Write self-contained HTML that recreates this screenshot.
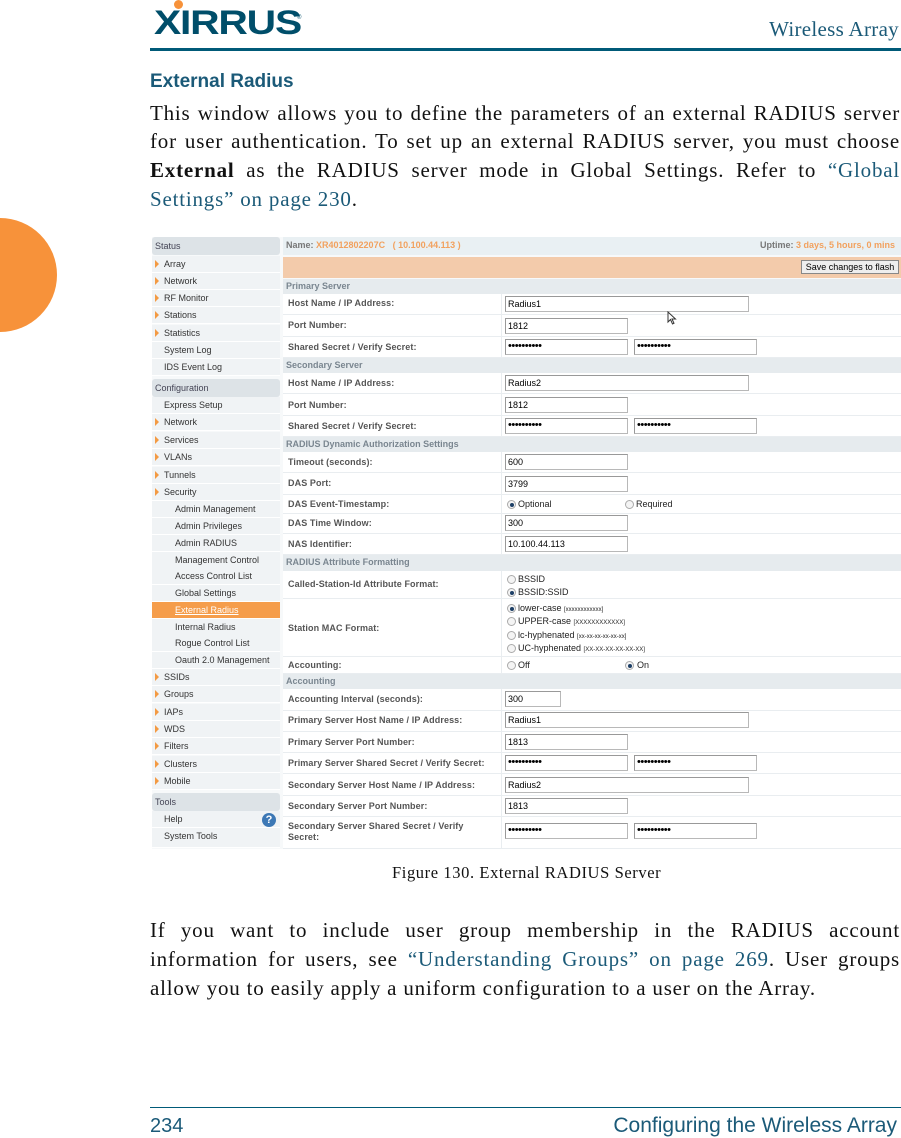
<!DOCTYPE html>
<html><head><meta charset="utf-8"><style>
*{margin:0;padding:0;box-sizing:border-box}
body{width:901px;height:1137px;position:relative;background:#fff;overflow:hidden;font-family:"Liberation Serif",serif}
.a{position:absolute;white-space:nowrap}
.s{position:absolute;white-space:nowrap;font:9px/11px "Liberation Sans",sans-serif;color:#222}
.lb{position:absolute;left:288px;white-space:nowrap;font:bold 9px/11px "Liberation Sans",sans-serif;color:#555;letter-spacing:.1px}
.hd{position:absolute;left:283px;width:618px;background:#e6ebee;font:bold 9px/14px "Liberation Sans",sans-serif;color:#7a8690;padding-left:3px}
.rw{position:absolute;left:283px;width:618px;border-bottom:1px solid #e9edf0;background:#fff}
.rw:after{content:"";position:absolute;left:218px;top:0;bottom:0;width:1px;background:#e9edf0}
.in{position:absolute;height:16px;border:1px solid #b8b8b8;border-top-color:#999;border-left-color:#999;background:#fff;font:9px/14px "Liberation Sans",sans-serif;color:#000;padding-left:2px;overflow:hidden}
.L{left:505px;width:244px}.S{left:505px;width:123px}.S2{left:634px;width:123px}
.p{font-size:11px;letter-spacing:-.5px;line-height:12px}
.sb{position:absolute;left:152px;width:128px;background:#f0f3f5;border-bottom:1px solid #fff;font:9px/17px "Liberation Sans",sans-serif;color:#333;padding-left:12px;height:17px}
.sb.ar:before{content:"";position:absolute;left:3px;top:4px;border-left:4px solid #f39a43;border-top:4px solid transparent;border-bottom:4px solid transparent}
.sb.j{padding-left:23px}
.sh{position:absolute;left:152px;width:128px;background:#dde3e7;border-radius:3px;font:9px/18px "Liberation Sans",sans-serif;color:#445;padding-left:3px;height:18px}
.rd{position:absolute;width:9px;height:9px;border-radius:50%;border:1px solid #aaa;background:#f4f4f4}
.rd.on:after{content:"";position:absolute;left:1.5px;top:1.5px;width:4px;height:4px;border-radius:50%;background:#1d3f66}
.tx{position:absolute;left:150px;width:750px;font-size:21px;letter-spacing:.8px;line-height:29px;text-align:justify;text-align-last:justify;color:#111;white-space:nowrap}
.lk{color:#1b5a78}
</style></head><body>

<div class="a" style="left:154px;top:4px;font:bold 34px/38px 'Liberation Sans',sans-serif;color:#004e6a;letter-spacing:-1px;transform:scaleX(1.2);transform-origin:left">XIRRUS</div>
<div class="a" style="left:174px;top:0;width:9px;height:9px;border-radius:50%;background:#f7923a"></div>
<div class="a" style="left:297px;top:15px;font:6px 'Liberation Sans';color:#004e6a">®</div>
<div class="a" style="right:2px;top:17px;font-size:21px;letter-spacing:.3px;color:#1b5a78">Wireless Array</div>
<div class="a" style="left:150px;top:48px;width:751px;height:3px;background:#005a78"></div>

<div class="a" style="left:-57px;top:218px;width:114px;height:114px;border-radius:50%;background:#f7923a"></div>

<div class="a" style="left:150px;top:70px;font:bold 19px/24px 'Liberation Sans',sans-serif;color:#1b5a78">External Radius</div>
<div class="tx" style="top:99px">This window allows you to define the parameters of an external RADIUS server</div>
<div class="tx" style="top:127px">for user authentication. To set up an external RADIUS server, you must choose</div>
<div class="tx" style="top:156px"><b>External</b> as the RADIUS server mode in Global Settings. Refer to <span class="lk">“Global</span></div>
<div class="tx" style="top:185px;text-align-last:left"><span class="lk">Settings” on page 230</span>.</div>

<div class="a" style="left:152px;top:237px;width:749px;height:612px;background:#f7f9fa"></div>
<div class="sh" style="top:237px">Status</div>
<div class="sb ar" style="top:256px">Array</div>
<div class="sb ar" style="top:273px">Network</div>
<div class="sb ar" style="top:290px">RF Monitor</div>
<div class="sb ar" style="top:307px">Stations</div>
<div class="sb ar" style="top:325px">Statistics</div>
<div class="sb" style="top:342px">System Log</div>
<div class="sb" style="top:359px">IDS Event Log</div>
<div class="sh" style="top:379px">Configuration</div>
<div class="sb" style="top:397px">Express Setup</div>
<div class="sb ar" style="top:414px">Network</div>
<div class="sb ar" style="top:432px">Services</div>
<div class="sb ar" style="top:449px">VLANs</div>
<div class="sb ar" style="top:467px">Tunnels</div>
<div class="sb ar" style="top:484px">Security</div>
<div class="sb j" style="top:501px">Admin Management</div>
<div class="sb j" style="top:518px">Admin Privileges</div>
<div class="sb j" style="top:535px">Admin RADIUS</div>
<div class="sb j" style="top:552px">Management Control</div>
<div class="sb j" style="top:568px">Access Control List</div>
<div class="sb j" style="top:585px">Global Settings</div>
<div class="sb j" style="top:602px;background:#f59d4b;color:#fff;text-decoration:underline">External Radius</div>
<div class="sb j" style="top:619px">Internal Radius</div>
<div class="sb j" style="top:635px">Rogue Control List</div>
<div class="sb j" style="top:652px">Oauth 2.0 Management</div>
<div class="sb ar" style="top:669px">SSIDs</div>
<div class="sb ar" style="top:686px">Groups</div>
<div class="sb ar" style="top:704px">IAPs</div>
<div class="sb ar" style="top:721px">WDS</div>
<div class="sb ar" style="top:738px">Filters</div>
<div class="sb ar" style="top:756px">Clusters</div>
<div class="sb ar" style="top:773px">Mobile</div>
<div class="sh" style="top:793px">Tools</div>
<div class="sb" style="top:811px">Help<span style="position:absolute;left:110px;top:2px;width:14px;height:14px;border-radius:50%;background:#3d78b5;color:#fff;font:bold 11px/14px 'Liberation Sans';text-align:center">?</span></div>
<div class="sb" style="top:828px;height:20px">System Tools</div>

<div class="a" style="left:283px;top:237px;width:618px;height:18px;background:#e9f0f3"></div>
<div class="s" style="left:286px;top:240px;color:#777;font-weight:bold">Name: <span style="color:#f2a15e">XR4012802207C &nbsp;&nbsp;( 10.100.44.113 )</span></div>
<div class="s" style="left:760px;top:240px;color:#777;font-weight:bold">Uptime: <span style="color:#f2a15e">3 days, 5 hours, 0 mins</span></div>
<div class="a" style="left:283px;top:257px;width:618px;height:21px;background:#f3cbab"></div>
<div class="a" style="left:801px;top:260px;width:98px;height:14px;border:1px solid #888;background:#eee;font:9px/12px 'Liberation Sans';text-align:center">Save changes to flash</div>

<div class="hd" style="top:279px;height:15px">Primary Server</div>
<div class="rw" style="top:294px;height:21px"></div><div class="lb" style="top:298px">Host Name / IP Address:</div><div class="in L" style="top:296px">Radius1</div>
<div class="rw" style="top:315px;height:22px"></div><div class="lb" style="top:320px">Port Number:</div><div class="in S" style="top:318px">1812</div>
<div class="rw" style="top:337px;height:21px"></div><div class="lb" style="top:342px">Shared Secret / Verify Secret:</div><div class="in S p" style="top:339px">••••••••••</div><div class="in S2 p" style="top:339px">••••••••••</div>
<div class="hd" style="top:358px;height:15px">Secondary Server</div>
<div class="rw" style="top:373px;height:21px"></div><div class="lb" style="top:378px">Host Name / IP Address:</div><div class="in L" style="top:375px">Radius2</div>
<div class="rw" style="top:394px;height:22px"></div><div class="lb" style="top:400px">Port Number:</div><div class="in S" style="top:397px">1812</div>
<div class="rw" style="top:416px;height:21px"></div><div class="lb" style="top:421px">Shared Secret / Verify Secret:</div><div class="in S p" style="top:418px">••••••••••</div><div class="in S2 p" style="top:418px">••••••••••</div>
<div class="hd" style="top:437px;height:15px">RADIUS Dynamic Authorization Settings</div>
<div class="rw" style="top:452px;height:21px"></div><div class="lb" style="top:457px">Timeout (seconds):</div><div class="in S" style="top:454px">600</div>
<div class="rw" style="top:473px;height:22px"></div><div class="lb" style="top:478px">DAS Port:</div><div class="in S" style="top:476px">3799</div>
<div class="rw" style="top:495px;height:19px"></div><div class="lb" style="top:499px">DAS Event-Timestamp:</div>
<div class="rd on" style="left:507px;top:500px"></div><div class="s" style="left:518px;top:499px">Optional</div>
<div class="rd" style="left:625px;top:500px"></div><div class="s" style="left:636px;top:499px">Required</div>
<div class="rw" style="top:514px;height:20px"></div><div class="lb" style="top:518px">DAS Time Window:</div><div class="in S" style="top:515px">300</div>
<div class="rw" style="top:534px;height:21px"></div><div class="lb" style="top:539px">NAS Identifier:</div><div class="in S" style="top:536px">10.100.44.113</div>
<div class="hd" style="top:555px;height:16px">RADIUS Attribute Formatting</div>
<div class="rw" style="top:571px;height:28px"></div><div class="lb" style="top:579px">Called-Station-Id Attribute Format:</div>
<div class="rd" style="left:507px;top:575px"></div><div class="s" style="left:518px;top:574px">BSSID</div>
<div class="rd on" style="left:507px;top:588px"></div><div class="s" style="left:518px;top:587px">BSSID:SSID</div>
<div class="rw" style="top:599px;height:58px"></div><div class="lb" style="top:623px">Station MAC Format:</div>
<div class="rd on" style="left:507px;top:604px"></div><div class="s" style="left:518px;top:603px">lower-case <span style="font-size:6px">[xxxxxxxxxxxx]</span></div>
<div class="rd" style="left:507px;top:617px"></div><div class="s" style="left:518px;top:616px">UPPER-case <span style="font-size:6px">[XXXXXXXXXXXX]</span></div>
<div class="rd" style="left:507px;top:631px"></div><div class="s" style="left:518px;top:630px">lc-hyphenated <span style="font-size:6px">[xx-xx-xx-xx-xx-xx]</span></div>
<div class="rd" style="left:507px;top:644px"></div><div class="s" style="left:518px;top:643px">UC-hyphenated <span style="font-size:6px">[XX-XX-XX-XX-XX-XX]</span></div>
<div class="rw" style="top:657px;height:17px"></div><div class="lb" style="top:660px">Accounting:</div>
<div class="rd" style="left:507px;top:661px"></div><div class="s" style="left:518px;top:660px">Off</div>
<div class="rd on" style="left:625px;top:661px"></div><div class="s" style="left:637px;top:660px">On</div>
<div class="hd" style="top:674px;height:15px">Accounting</div>
<div class="rw" style="top:689px;height:22px"></div><div class="lb" style="top:694px">Accounting Interval (seconds):</div><div class="in" style="left:505px;width:56px;top:691px">300</div>
<div class="rw" style="top:711px;height:21px"></div><div class="lb" style="top:715px">Primary Server Host Name / IP Address:</div><div class="in L" style="top:712px">Radius1</div>
<div class="rw" style="top:732px;height:21px"></div><div class="lb" style="top:737px">Primary Server Port Number:</div><div class="in S" style="top:734px">1813</div>
<div class="rw" style="top:753px;height:21px"></div><div class="lb" style="top:758px">Primary Server Shared Secret / Verify Secret:</div><div class="in S p" style="top:755px">••••••••••</div><div class="in S2 p" style="top:755px">••••••••••</div>
<div class="rw" style="top:774px;height:22px"></div><div class="lb" style="top:780px">Secondary Server Host Name / IP Address:</div><div class="in L" style="top:777px">Radius2</div>
<div class="rw" style="top:796px;height:21px"></div><div class="lb" style="top:801px">Secondary Server Port Number:</div><div class="in S" style="top:798px">1813</div>
<div class="rw" style="top:817px;height:32px"></div><div class="lb" style="top:821px;line-height:11px">Secondary Server Shared Secret / Verify<br>Secret:</div><div class="in S p" style="top:823px">••••••••••</div><div class="in S2 p" style="top:823px">••••••••••</div>
<svg class="a" style="left:667px;top:311px" width="10" height="14" viewBox="0 0 10 14"><path d="M1 1 L1 11 L3.5 8.5 L5.5 13 L7 12.3 L5 8 L8.5 8 Z" fill="#fff" stroke="#333" stroke-width="1"/></svg>

<div class="a" style="left:392px;top:863px;font-size:16.5px;letter-spacing:.6px;color:#111">Figure 130. External RADIUS Server</div>

<div class="tx" style="top:916px">If you want to include user group membership in the RADIUS account</div>
<div class="tx" style="top:945px">information for users, see <span class="lk">“Understanding Groups” on page 269</span>. User groups</div>
<div class="tx" style="top:974px;text-align-last:left">allow you to easily apply a uniform configuration to a user on the Array.</div>

<div class="a" style="left:150px;top:1107px;width:751px;height:1px;background:#005a78"></div>
<div class="a" style="left:150px;top:1114px;font:20px/24px 'Liberation Sans Narrow','Liberation Sans',sans-serif;color:#1b5a78">234</div>
<div class="a" style="right:4px;top:1114px;font:21px/24px 'Liberation Sans Narrow','Liberation Sans',sans-serif;color:#1b5a78">Configuring the Wireless Array</div>
</body></html>
